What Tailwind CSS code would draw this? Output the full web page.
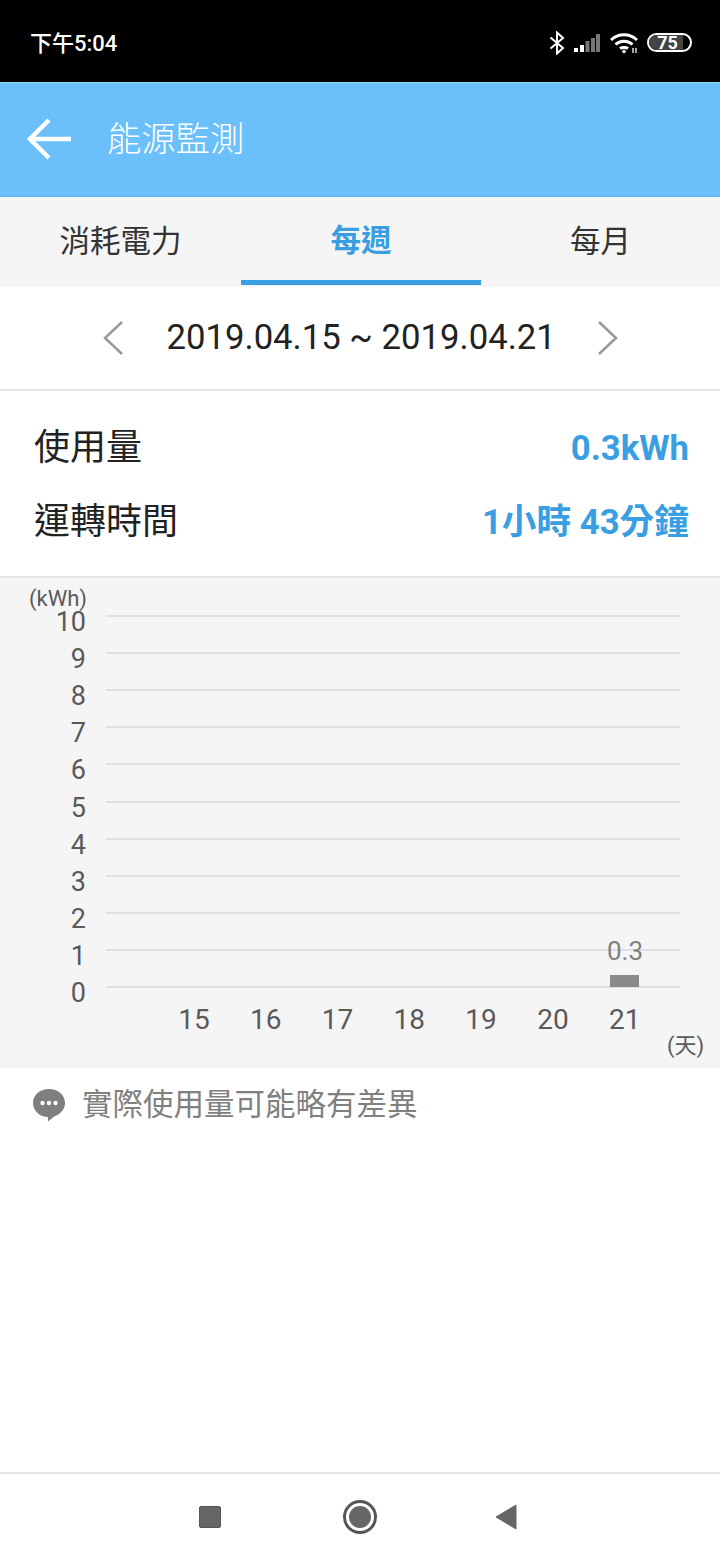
<!DOCTYPE html>
<html lang="zh-Hant">
<head>
  <meta charset="UTF-8" />
  <meta name="viewport" content="width=device-width, initial-scale=1.0"/>
  <title>能源監測</title>
  <script src="https://cdn.jsdelivr.net/npm/@tailwindcss/browser@4"></script>
</head>
<body class="bg-white font-['Roboto','Noto_Sans_CJK_TC',sans-serif]">
<div class="w-[720px] h-[1560px] flex flex-col overflow-hidden">

  <!-- status bar -->
  <div class="h-[82px] bg-black flex items-center pl-[30px] pr-[28px] pt-[3px] text-white shrink-0">
    <span class="text-[22px] font-medium leading-none flex-1 pt-[2px]">下午5:04</span>
    <svg width="16" height="24" viewBox="0 0 16 24" class="mr-[8px]" fill="none" stroke="#fff" stroke-width="2"><path d="M1.500 6.500 14 17 8 22.500V1.500L14 7 1.500 17.500"/></svg>
    <svg width="27" height="20" viewBox="0 0 27 20" class="mr-[10px]">
      <rect x="1" y="15" width="4" height="4" fill="#fff"/>
      <path d="M7 12h4v7H7z" fill="#fff"/>
      <rect x="12.500" y="8" width="4" height="11" fill="#777"/>
      <rect x="18" y="5" width="4" height="14" fill="#777"/>
      <rect x="23" y="1" width="4" height="18" fill="#777"/>
    </svg>
    <svg width="28" height="22" viewBox="0 0 28 22" class="mr-[9px]" fill="none" stroke="#fff" stroke-width="3">
      <path d="M1 8C8 1 20 1 27 8"/>
      <path d="M5.500 12.500C10 8 18 8 22.500 12.500"/>
      <path d="M10 16.500C12 15 16 15 18 16.500"/>
      <circle cx="14" cy="19.500" r="1.800" fill="#fff" stroke="none"/>
      <path d="M23 16v5M26 16v5" stroke-width="1.300"/>
    </svg>
    <div class="relative w-[45px] h-[19px] rounded-full border-2 border-white flex items-center justify-center">
      <div class="absolute inset-y-0 left-0 w-[34px] bg-[#444] rounded-l-full"></div>
      <span class="relative text-[18px] font-bold leading-[15px] -ml-[4px]">75</span>
    </div>
  </div>

  <!-- header -->
  <div class="h-[115px] bg-[#6bc0f9] border-t border-[#8fdcf5] border-b-2 border-b-[#63b8f3] flex items-center pl-[27px] shrink-0">
    <svg width="46" height="42" viewBox="0 0 46 42" fill="none" stroke="#fff" stroke-width="4.500" class="mr-[34px]">
      <path d="M44 21H4"/>
      <path d="M22 2 3 21l19 19"/>
    </svg>
    <span class="text-white text-[34.300px] font-light leading-none">能源監測</span>
  </div>

  <!-- tabs -->
  <div class="h-[89px] bg-[#f5f5f5] border-b border-[#eeeeee] grid grid-cols-[241px_240px_239px] text-[30.500px] text-[#333] shrink-0">
    <div class="flex items-center justify-center pt-[1px]">消耗電力</div>
    <div class="flex items-center justify-center border-b-[5px] border-[#3a9fe2] text-[#3a9fe2] font-bold pt-[4px]">每週</div>
    <div class="flex items-center justify-center pt-[1px]">每月</div>
  </div>

  <!-- date range -->
  <div class="h-[105px] border-b-2 border-[#e6e6e6] flex items-center justify-center gap-[43px] shrink-0">
    <svg width="22" height="36" viewBox="0 0 22 36" fill="none" stroke="#999" stroke-width="2.500"><path d="M20 2 3 18l17 16"/></svg>
    <span class="text-[34.700px] text-[#222] leading-none w-[387px] text-center whitespace-nowrap">2019.04.15 ~ 2019.04.21</span>
    <svg width="22" height="36" viewBox="0 0 22 36" fill="none" stroke="#999" stroke-width="2.500"><path d="M2 2l17 16L2 34"/></svg>
  </div>

  <!-- usage -->
  <div class="h-[185px] pl-[34px] pr-[31px] pt-[20px] shrink-0">
    <div class="h-[74px] flex items-center justify-between">
      <span class="text-[36px] text-[#222]">使用量</span>
      <span class="text-[34.700px] font-bold text-[#3a9fe2]">0.3kWh</span>
    </div>
    <div class="h-[74px] flex items-center justify-between">
      <span class="text-[36px] text-[#222]">運轉時間</span>
      <span class="text-[34.700px] font-bold text-[#3a9fe2]">1小時 43分鐘</span>
    </div>
  </div>

  <!-- chart -->
  <div class="relative h-[492px] bg-[#f5f5f5] border-t-2 border-[#e6e6e6] shrink-0 text-[#5a5a5a]">
    <div class="absolute left-[29px] top-[7px] text-[22px] leading-[28px]">(kWh)</div>
    <div class="flex flex-col pt-[26px]">
      <div class="h-[37.100px] flex items-center text-[27px]"><span class="w-[86px] text-right leading-none">10</span><div class="ml-[20px] mb-[13px] w-[574px] h-[2px] bg-[#e0e0e0]"></div></div>
      <div class="h-[37.100px] flex items-center text-[27px]"><span class="w-[86px] text-right leading-none">9</span><div class="ml-[20px] mb-[13px] w-[574px] h-[2px] bg-[#e0e0e0]"></div></div>
      <div class="h-[37.100px] flex items-center text-[27px]"><span class="w-[86px] text-right leading-none">8</span><div class="ml-[20px] mb-[13px] w-[574px] h-[2px] bg-[#e0e0e0]"></div></div>
      <div class="h-[37.100px] flex items-center text-[27px]"><span class="w-[86px] text-right leading-none">7</span><div class="ml-[20px] mb-[13px] w-[574px] h-[2px] bg-[#e0e0e0]"></div></div>
      <div class="h-[37.100px] flex items-center text-[27px]"><span class="w-[86px] text-right leading-none">6</span><div class="ml-[20px] mb-[13px] w-[574px] h-[2px] bg-[#e0e0e0]"></div></div>
      <div class="h-[37.100px] flex items-center text-[27px]"><span class="w-[86px] text-right leading-none">5</span><div class="ml-[20px] mb-[13px] w-[574px] h-[2px] bg-[#e0e0e0]"></div></div>
      <div class="h-[37.100px] flex items-center text-[27px]"><span class="w-[86px] text-right leading-none">4</span><div class="ml-[20px] mb-[13px] w-[574px] h-[2px] bg-[#e0e0e0]"></div></div>
      <div class="h-[37.100px] flex items-center text-[27px]"><span class="w-[86px] text-right leading-none">3</span><div class="ml-[20px] mb-[13px] w-[574px] h-[2px] bg-[#e0e0e0]"></div></div>
      <div class="h-[37.100px] flex items-center text-[27px]"><span class="w-[86px] text-right leading-none">2</span><div class="ml-[20px] mb-[13px] w-[574px] h-[2px] bg-[#e0e0e0]"></div></div>
      <div class="h-[37.100px] flex items-center text-[27px]"><span class="w-[86px] text-right leading-none">1</span><div class="ml-[20px] mb-[13px] w-[574px] h-[2px] bg-[#e0e0e0]"></div></div>
      <div class="h-[37.100px] flex items-center text-[27px]"><span class="w-[86px] text-right leading-none">0</span><div class="ml-[20px] mb-[13px] w-[574px] h-[2px] bg-[#e0e0e0]"></div></div>
    </div>
    <!-- x axis -->
    <div class="flex pl-[158px] -mt-[12px] text-[28px] leading-[40px]">
      <span class="w-[71.800px] text-center">15</span>
      <span class="w-[71.800px] text-center">16</span>
      <span class="w-[71.800px] text-center">17</span>
      <span class="w-[71.800px] text-center">18</span>
      <span class="w-[71.800px] text-center">19</span>
      <span class="w-[71.800px] text-center">20</span>
      <span class="w-[71.800px] text-center">21</span>
    </div>
    <div class="absolute left-[667px] top-[454px] text-[22px] leading-[28px]">(天)</div>
    <!-- bar -->
    <div class="absolute left-[610px] top-[397px] w-[29px] h-[12px] bg-[#8a8a8a]"></div>
    <div class="absolute left-[600px] top-[358px] w-[50px] text-center text-[26px] leading-[30px] text-[#808080]">0.3</div>
  </div>

  <!-- note -->
  <div class="h-[74px] flex items-center pl-[32px] gap-[16px] shrink-0">
    <svg width="34" height="34" viewBox="0 0 34 34">
      <path d="M17 1C8 1 1 7 1 15c0 8 7 14 15 14l0 4.500 6-5C29 26 33 21 33 15 33 7 26 1 17 1z" fill="#7f7f7f"/>
      <circle cx="10.500" cy="15" r="2.200" fill="#fff"/><circle cx="17" cy="15" r="2.200" fill="#fff"/><circle cx="23.500" cy="15" r="2.200" fill="#fff"/>
    </svg>
    <span class="text-[30.500px] text-[#808080] leading-none whitespace-nowrap">實際使用量可能略有差異</span>
  </div>

  <div class="flex-1"></div>

  <!-- nav bar -->
  <div class="h-[88px] border-t-2 border-[#e6e6e6] flex items-center justify-center pr-[4px] shrink-0">
    <div class="w-[22px] h-[22px] bg-[#666] rounded-[2px] border border-[#555]"></div>
    <div class="ml-[122px] w-[34px] h-[34px] rounded-full border-[3px] border-[#555] flex items-center justify-center">
      <div class="w-[22px] h-[22px] rounded-full bg-[#666]"></div>
    </div>
    <svg width="22" height="26" viewBox="0 0 22 26" class="ml-[118px]"><path d="M21 1v24L1 13z" fill="#666" stroke="#666" stroke-linejoin="round"/></svg>
  </div>
</div>
</body>
</html>
